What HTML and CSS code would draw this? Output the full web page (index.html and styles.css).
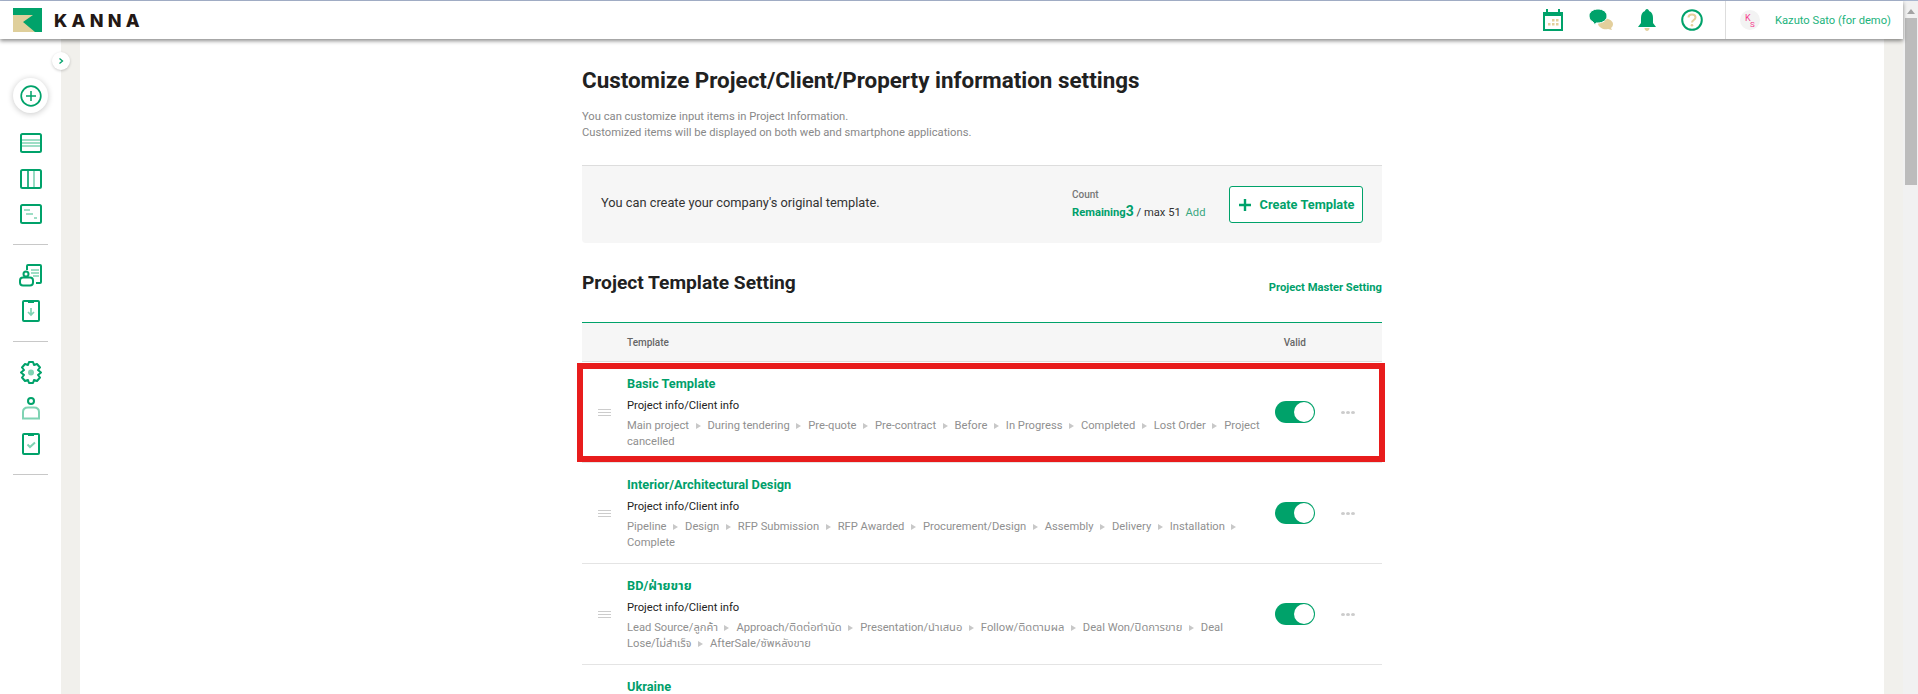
FILE: index.html
```html
<!DOCTYPE html>
<html lang="en">
<head>
<meta charset="utf-8">
<title>KANNA</title>
<link rel="stylesheet" href="styles.css">
</head>
<body>
<div class="app">
  <div class="page">
    <header class="topbar">
      <div class="brand">
        <svg class="logo" viewBox="0 0 29 24" width="29" height="24"><rect width="29" height="24" fill="#00a26a"/><path d="M0 7H20L10 14L22 24H0Z" fill="#dfcf9b"/></svg>
        <span class="wordmark">KANNA</span>
      </div>
      <div class="top-icons">
        <svg class="ti" width="22" height="24" viewBox="0 0 22 24"><path d="M2 5H20V22H2Z" fill="none" stroke="#00a26a" stroke-width="2"/><path d="M1 4H21V8H1Z" fill="#00a26a"/><path d="M5 1V5M17 1V5" stroke="#00a26a" stroke-width="2"/><path d="M10 11h2.500v2.500H10zM14 11h2.500v2.500H14zM6 15h2.500v2.500H6zM10 15h2.500v2.500H10zM14 15h2.500v2.500H14z" fill="#e3cf9c"/></svg>
        <svg class="ti" width="24" height="22" viewBox="0 0 24 22"><path d="M12 9C18 9 24 11 24 15C24 17 23 18 22 19L23 21L19 20C15 21 10 19 9 15Z" fill="#e3cf9c"/><path d="M9 0C14 0 18 3 18 7C18 11 14 14 9 14H7L6 16L4 13C2 12 0 10 0 7C0 3 4 0 9 0Z" fill="#00a26a" stroke="#fff" stroke-width="1"/></svg>
        <svg class="ti" width="18" height="22" viewBox="0 0 18 22"><path d="M9 0C10 0 11 1 11 2C14 3 15 6 15 9V14L18 18H0L3 14V9C3 6 4 3 7 2C7 1 8 0 9 0Z" fill="#00a26a"/><path d="M6.500 19H11.500C11.500 21 10 22 9 22C8 22 6.500 21 6.500 19Z" fill="#e3cf9c"/></svg>
        <svg class="ti" width="22" height="22" viewBox="0 0 22 22"><circle cx="11" cy="11" r="9.800" fill="none" stroke="#00a26a" stroke-width="2"/><path d="M7.500 8.500C7.500 6.500 9 5.500 11 5.500C13 5.500 14.500 6.800 14.500 8.500C14.500 11 11 11 11 13.500" fill="none" stroke="#e3cf9c" stroke-width="2"/><circle cx="11" cy="16.300" r="1.300" fill="#e3cf9c"/></svg>
      </div>
      <div class="user">
        <span class="avatar"><span class="av-k">K</span><span class="av-s">S</span></span>
        <span class="user-name">Kazuto Sato (for demo)</span>
      </div>
    </header>
    <div class="body">
      <aside class="sidebar">
        <button class="expand"><svg width="6" height="6" viewBox="0 0 6 6"><path d="M1.500 .5L4.500 3L1.500 5.500" fill="none" stroke="#00a26a" stroke-width="1.300"/></svg></button>
        <button class="add"><svg width="22" height="22" viewBox="0 0 22 22"><circle cx="11" cy="11" r="9.800" fill="none" stroke="#00a26a" stroke-width="1.700"/><path d="M11 6V16M6 11H16" stroke="#00a26a" stroke-width="1.500"/></svg></button>
        <nav class="nav-group first">
          <svg width="22" height="20" viewBox="0 0 22 20"><rect x="1" y="1" width="20" height="18" rx="1.500" fill="none" stroke="#00a26a" stroke-width="2"/><path d="M2 7H20M2 10H20M2 13H20" stroke="#7fd3b3" stroke-width="1.600"/></svg>
          <svg width="22" height="20" viewBox="0 0 22 20"><rect x="1" y="1" width="20" height="18" rx="1.500" fill="none" stroke="#00a26a" stroke-width="2"/><path d="M8 2V18" stroke="#00a26a" stroke-width="1.600"/><path d="M14 2V18" stroke="#7fd3b3" stroke-width="1.600"/></svg>
          <svg width="22" height="20" viewBox="0 0 22 20"><rect x="1" y="1" width="20" height="18" rx="1.500" fill="none" stroke="#00a26a" stroke-width="2"/><path d="M4 6H10M6 10H13M14 14H17" stroke="#7fd3b3" stroke-width="1.600"/></svg>
        </nav>
        <hr class="nav-rule">
        <nav class="nav-group">
          <svg width="23" height="23" viewBox="0 0 23 23"><path d="M8 6V2C8 1.500 8.500 1 9 1H21C21.500 1 22 1.500 22 2V18C22 18.500 21.500 19 21 19H17" fill="none" stroke="#00a26a" stroke-width="2"/><path d="M12 6H20M12 9H20M14 12H20" stroke="#7fd3b3" stroke-width="1.500"/><circle cx="7" cy="10" r="2.500" fill="none" stroke="#00a26a" stroke-width="2"/><rect x="1" y="13.500" width="13" height="8" rx="3" fill="none" stroke="#00a26a" stroke-width="2"/></svg>
          <svg width="18" height="22" viewBox="0 0 18 22"><rect x="1" y="1" width="16" height="20" rx="1" fill="none" stroke="#00a26a" stroke-width="2"/><path d="M6 1H12V3H6Z" fill="#00a26a"/><path d="M9 8V15M6 12L9 15L12 12" fill="none" stroke="#7fd3b3" stroke-width="1.700"/></svg>
        </nav>
        <hr class="nav-rule">
        <nav class="nav-group">
          <svg width="22" height="23" viewBox="0 0 22 23"><path d="M9 1H13L14 4L17 3L20 6.500L18 9L21 11.500L18 14L20 16.500L17 20L14 19L13 22H9L8 19L5 20L2 16.500L4 14L1 11.500L4 9L2 6.500L5 3L8 4Z" fill="none" stroke="#00a26a" stroke-width="2" stroke-linejoin="round"/><circle cx="11" cy="11.500" r="3" fill="#7fd3b3"/></svg>
          <svg width="18" height="23" viewBox="0 0 18 23"><circle cx="9" cy="4" r="3" fill="none" stroke="#00a26a" stroke-width="2"/><path d="M1 21.500V15C1 12 3 10.500 6 10.500H12C15 10.500 17 12 17 15V21.500Z" fill="none" stroke="#7fd3b3" stroke-width="2"/></svg>
          <svg width="18" height="22" viewBox="0 0 18 22"><rect x="1" y="1" width="16" height="20" rx="1" fill="none" stroke="#00a26a" stroke-width="2"/><path d="M6 1H12V3H6Z" fill="#00a26a"/><path d="M5.500 11.500L8 14L13 9.500" fill="none" stroke="#7fd3b3" stroke-width="2"/></svg>
        </nav>
        <hr class="nav-rule">
      </aside>
      <div class="gutter"></div>
      <main class="main">
        <div class="content">
          <h1 class="title">Customize Project/Client/Property information settings</h1>
          <p class="lede">You can customize input items in Project Information.<br>Customized items will be displayed on both web and smartphone applications.</p>
          <section class="notice">
            <p class="notice-text">You can create your company's original template.</p>
            <div class="count">
              <div class="count-label">Count</div>
              <div class="count-line"><b class="remain">Remaining<span class="remain-n">3</span></b> / max 51 <a class="add-link">Add</a></div>
            </div>
            <button class="create"><svg width="14" height="14" viewBox="0 0 14 14"><path d="M7 1V13M1 7H13" stroke="#00a26a" stroke-width="2.400"/></svg>Create Template</button>
          </section>
          <div class="section-head">
            <h2 class="section-title">Project Template Setting</h2>
            <a class="master-link">Project Master Setting</a>
          </div>
          <div class="table">
            <div class="thead"><span class="th-name">Template</span><span class="th-valid">Valid</span></div>

            <div class="row">
              <div class="handle"><i></i><i></i><i></i></div>
              <div class="cell">
                <div class="row-title">Basic Template</div>
                <div class="row-sub">Project info/Client info</div>
                <div class="steps">Main project<i class="arrow"></i>During tendering<i class="arrow"></i>Pre-quote<i class="arrow"></i>Pre-contract<i class="arrow"></i>Before<i class="arrow"></i>In Progress<i class="arrow"></i>Completed<i class="arrow"></i>Lost Order<i class="arrow"></i>Project cancelled</div>
              </div>
              <span class="toggle"><span class="knob"></span></span>
              <span class="dots"><i></i><i></i><i></i></span>
            </div>

            <div class="row">
              <div class="handle"><i></i><i></i><i></i></div>
              <div class="cell">
                <div class="row-title">Interior/Architectural Design</div>
                <div class="row-sub">Project info/Client info</div>
                <div class="steps">Pipeline<i class="arrow"></i>Design<i class="arrow"></i>RFP Submission<i class="arrow"></i>RFP Awarded<i class="arrow"></i>Procurement/Design<i class="arrow"></i>Assembly<i class="arrow"></i>Delivery<i class="arrow"></i>Installation<i class="arrow"></i>Complete</div>
              </div>
              <span class="toggle"><span class="knob"></span></span>
              <span class="dots"><i></i><i></i><i></i></span>
            </div>

            <div class="row">
              <div class="handle"><i></i><i></i><i></i></div>
              <div class="cell">
                <div class="row-title">BD/ฝ่ายขาย</div>
                <div class="row-sub">Project info/Client info</div>
                <div class="steps">Lead Source/ลูกค้า<i class="arrow"></i>Approach/ติดต่อทำนัด<i class="arrow"></i>Presentation/นำเสนอ<i class="arrow"></i>Follow/ติดตามผล<i class="arrow"></i>Deal Won/ปิดการขาย<i class="arrow"></i>Deal <span class="keep">Lose/ไม่สำเร็จ</span><i class="arrow"></i>AfterSale/ซัพหลังขาย</div>
              </div>
              <span class="toggle"><span class="knob"></span></span>
              <span class="dots"><i></i><i></i><i></i></span>
            </div>

            <div class="row">
              <div class="handle"><i></i><i></i><i></i></div>
              <div class="cell">
                <div class="row-title">Ukraine</div>
                <div class="row-sub">Project info/Client info</div>
              </div>
            </div>
          </div>
        </div>
        <div class="highlight"></div>
      </main>
      <div class="gutter"></div>
    </div>
  </div>
  <div class="scrollbar">
    <svg class="sb-arrow" width="8" height="5" viewBox="0 0 8 5"><path d="M4 0L8 5H0Z" fill="#a3a3a3"/></svg>
    <div class="sb-thumb"></div>
  </div>
</div>
</body>
</html>
```

FILE: styles.css
```css
* { box-sizing: border-box; }
html, body { margin: 0; height: 100%; overflow: hidden; }
body { font-family: Roboto, "Noto Sans Thai", "Noto Sans", sans-serif; color: #333; background: #fff; }
p, h1, h2 { margin: 0; }
button { font-family: inherit; padding: 0; cursor: pointer; }

.app { display: flex; height: 694px; border-top: 1px solid #a9b6cf; }
.page { flex: 1; min-width: 0; display: flex; flex-direction: column; }

.topbar { position: relative; z-index: 3; flex: none; height: 38px; background: #fff; display: flex; align-items: center; padding-left: 13px; box-shadow: 0 2px 4px rgba(0,0,0,.45); }
.brand { display: flex; align-items: center; gap: 12px; }
.logo { display: block; }
.wordmark { font-family: Inter, sans-serif; font-weight: 800; font-size: 18px; letter-spacing: 4.25px; color: #231815; }
.top-icons { margin-left: auto; display: flex; align-items: center; gap: 25px; height: 100%; padding-right: 22px; }
.ti { display: block; }
.user { height: 100%; width: 178px; border-left: 1px solid #ddd; display: flex; align-items: center; padding-left: 14px; gap: 15px; }
.avatar { position: relative; width: 20px; height: 20px; border-radius: 50%; background: #f3f3f3; flex: none; }
.av-k, .av-s { position: absolute; font-size: 9px; color: #f5408f; line-height: 9px; }
.av-k { left: 5px; top: 4px; }
.av-s { left: 10px; top: 11px; font-size: 8px; line-height: 8px; }
.user-name { font-size: 11.2px; color: #1cb37c; white-space: nowrap; }

.body { flex: 1; min-height: 0; display: flex; }
.sidebar { position: relative; flex: none; width: 61px; background: #fff; display: flex; flex-direction: column; align-items: center; padding-top: 39px; }
.expand { position: absolute; left: 52px; top: 13px; width: 18px; height: 18px; border: 0; border-radius: 50%; background: #fff; box-shadow: 0 1px 3px rgba(0,0,0,.2); display: flex; align-items: center; justify-content: center; z-index: 2; }
.add { flex: none; width: 35px; height: 35px; border: 0; border-radius: 50%; background: #fff; box-shadow: 0 1px 6px rgba(0,0,0,.22); display: flex; align-items: center; justify-content: center; }
.nav-group { display: flex; flex-direction: column; align-items: center; gap: 13px; padding: 19px 0; }
.nav-group.first { gap: 15.5px; padding: 20px 0; }
.nav-rule { width: 35px; height: 1px; margin: 0; border: 0; background: #c8c8c8; flex: none; }

.gutter { flex: none; width: 19px; background: #f1f0ec; }
.main { position: relative; flex: 1; min-width: 0; overflow: hidden; background: #fff; }
.content { width: 800px; margin-left: 502px; padding-top: 28px; }

.title { font-size: 22.4px; font-weight: 700; line-height: 26px; color: #212121; }
.lede { margin-top: 16px; font-size: 11.2px; line-height: 16px; color: #888; }
.notice { margin-top: 24px; height: 78px; border-top: 1px solid #ddd; border-radius: 0 0 4px 4px; background: #f6f6f6; display: flex; align-items: center; padding: 0 19px; }
.notice-text { flex: 1; font-size: 12.8px; color: #333; margin-bottom: 4px; }
.count { width: 157px; }
.count-label { font-size: 10px; font-weight: 500; color: #777; line-height: 14px; padding-top: 1px; box-sizing: content-box; }
.count-line { font-size: 11.2px; line-height: 19px; color: #333; }
.remain { color: #009f6b; font-weight: 700; }
.remain-n { font-size: 14px; }
.add-link { color: #3aa780; margin-left: 2px; }
.create { width: 134px; height: 37px; border: 1px solid #00a26a; border-radius: 3px; background: #fff; color: #00a26a; font-size: 12.8px; font-weight: 700; display: flex; align-items: center; justify-content: center; gap: 8px; }

.section-head { margin-top: 29px; height: 22px; display: flex; align-items: center; justify-content: space-between; }
.section-title { font-size: 19.2px; font-weight: 700; color: #212121; line-height: 22px; }
.master-link { font-size: 11.2px; font-weight: 700; color: #009f6b; position: relative; top: 4px; }

.table { margin-top: 28px; border-top: 1px solid #00a26a; }
.thead { height: 39px; background: #f6f6f6; border-bottom: 1px solid #ddd; display: flex; align-items: center; font-size: 10px; font-weight: 500; color: #666; }
.th-name { padding-left: 45px; }
.th-valid { margin-left: auto; margin-right: 76px; }

.row { height: 101px; border-bottom: 1px solid #e4e4e4; display: flex; align-items: center; position: relative; }
.handle { flex: none; width: 13px; margin: 0 16px; display: flex; flex-direction: column; gap: 2px; }
.handle i { display: block; height: 1px; background: #ccc; }
.cell { flex: none; width: 636px; align-self: flex-start; padding-top: 14px; }
.row-title { font-size: 12.8px; font-weight: 700; line-height: 16px; color: #009f6b; }
.row-sub { margin-top: 6px; font-size: 11.2px; line-height: 16px; color: #222; }
.steps { margin-top: 4px; font-size: 11.2px; line-height: 16px; color: #909090; }
.keep { white-space: nowrap; }
.arrow { display: inline-block; width: 0; height: 0; margin: 0 7px 0 6.500px; border-left: 5px solid #c8c8c8; border-top: 3.5px solid transparent; border-bottom: 3.5px solid transparent; }
.toggle { flex: none; position: relative; width: 40px; height: 22px; margin-left: 12px; border-radius: 11px; background: #00a26a; }
.knob { position: absolute; right: 1px; top: 1px; width: 20px; height: 20px; border-radius: 50%; background: #fff; }
.dots { flex: none; margin-left: 26px; display: flex; gap: 1px; }
.dots i { display: block; width: 4px; height: 3px; border-radius: 50%; background: #ccc; }

.highlight { position: absolute; left: 497px; top: 324px; width: 808px; height: 99px; border: 6px solid #e81c1c; pointer-events: none; }

.scrollbar { flex: none; width: 15px; background: #f1f1f1; display: flex; flex-direction: column; align-items: center; padding-top: 8px; }
.sb-arrow { display: block; }
.sb-thumb { width: 12px; height: 167px; margin-top: 4px; background: #bcbcbc; }
```
